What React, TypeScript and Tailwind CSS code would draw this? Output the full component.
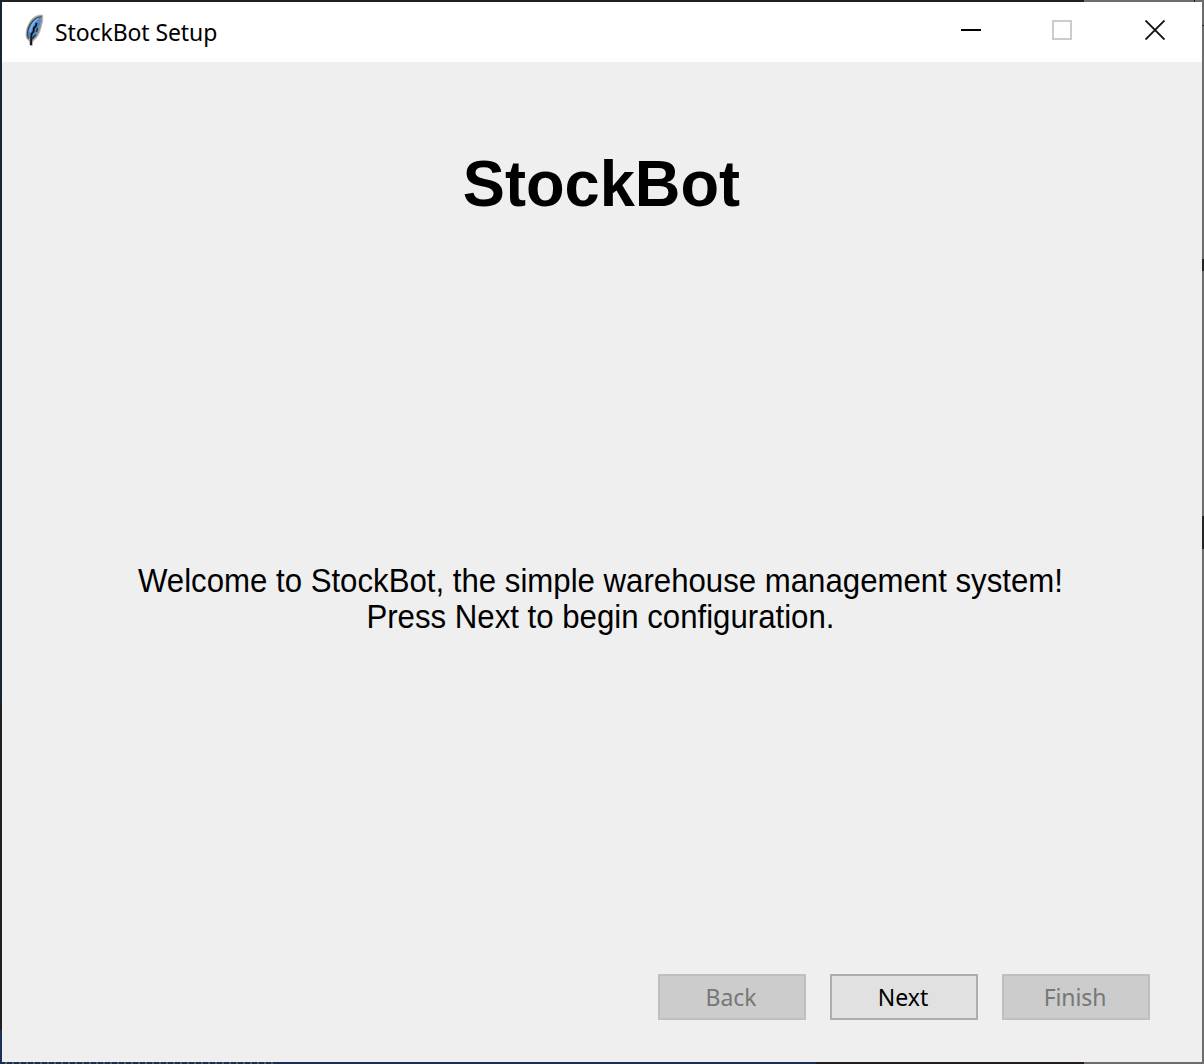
import React from "react";

function Feather() {
  return (
    <svg width="20" height="34" viewBox="0 0 20 34" className="block">
      <path d="M18.500 1C12 0.500 7 4.500 4.500 10.500C2 15 1.500 21 2.500 24L5.500 27.500L6 31.500L8 32L9 27C12.500 24.500 15 20.500 16.500 15.500C18 10 19.500 5 18.500 1Z" fill="#858585" fillOpacity="0.85" stroke="#b5b5b5" strokeWidth="0.8" />
      <path d="M16.500 3C11 4 7 9 5 14.500C3.500 19 3.500 22 5 24.500L9 24C12.500 21 14.500 17 15.500 12C16.500 8 17.500 5 16.500 3Z" fill="#4f8ad2" />
      <path d="M14 4C10 7.500 7 12 6 18" fill="none" stroke="#7fb2ee" strokeWidth="1.8" />
      <path d="M17.500 2.500C11.500 3 6.500 8.500 4.500 14C3.200 18.500 3 21.500 4.500 24.500" fill="none" stroke="#3c4147" strokeWidth="1.2" />
      <path d="M12.500 9L12 12L10 14L9.500 17.500L7.500 20L7 31" fill="none" stroke="#101418" strokeWidth="1.9" />
      <path d="M8 25L12 20.500M13.500 14L12.500 18" stroke="#293440" strokeWidth="1.5" />
    </svg>
  );
}

function TitleBar() {
  return (
    <header className="flex h-[60px] shrink-0 items-start bg-white">
      <div className="ml-[22px] mt-[12px] w-[20px]"><Feather /></div>
      <h2 className="ml-[11px] mt-[13px] whitespace-nowrap font-['Noto_Sans',sans-serif] text-[23px] leading-[34px] tracking-[-0.1px] text-black">StockBot Setup</h2>
      <div className="ml-auto mr-[36px] mt-[17px] flex gap-[71px]">
        <button aria-label="Minimize" className="flex h-[22px] w-[20px] items-center"><span className="h-[2px] w-[20px] bg-black" /></button>
        <button aria-label="Maximize" disabled className="mt-px h-[20px] w-[20px] border-2 border-[#ccc]" />
        <button aria-label="Close" className="ml-[2px] mt-px h-[20px] w-[21px]">
          <svg width="20" height="20" viewBox="0 0 20 20" fill="none" stroke="#111" strokeWidth="1.9"><path d="M0.500 0.500L19.500 19.500M19.500 0.500L0.500 19.500" /></svg>
        </button>
      </div>
    </header>
  );
}

export default function App() {
  return (
    <div className="flex h-[1064px] w-[1204px] flex-col overflow-hidden bg-[#efefef]">
      <div className="flex h-[2px] shrink-0"><i className="w-[1084px] bg-[#231f20]" /><i className="w-[110px] bg-[#6d6d6d]" /><i className="w-px bg-[#222]" /><i className="flex-1 bg-[#6d6d6d]" /></div>
      <div className="flex h-[1060px]">
        <div className="flex w-[2px] flex-col"><i className="h-[698px] bg-[#122733]" /><i className="h-[330px] bg-[#202023]" /><i className="flex-1 bg-[#1d3153]" /></div>
        <div className="flex w-[1200px] flex-col">
          <TitleBar />
          <main className="flex flex-1 flex-col items-center text-black">
            <h1 className="mt-[84px] mr-[2px] origin-center scale-x-[0.987] whitespace-nowrap font-['Liberation_Sans',sans-serif] text-[64px] leading-[76px] font-bold">StockBot</h1>
            <p className="mt-[341px] mr-[3px] origin-center scale-x-[0.945] text-center font-['Liberation_Sans',sans-serif] text-[33px] leading-[36px] whitespace-nowrap">Welcome to StockBot, the simple warehouse management system!<br />Press Next to begin configuration.</p>
            <div className="mr-[52px] mb-[42px] mt-auto flex gap-[24px] self-end font-['Noto_Sans',sans-serif] text-[23px] leading-[42px]">
              <button disabled className="h-[46px] w-[148px] border-2 border-[#bfbfbf] bg-[#ccc] pr-[2px] tracking-[-0.1px] text-[#777]">Back</button>
              <button className="h-[46px] w-[148px] border-2 border-[#adadad] bg-[#e1e1e1] pr-[2px]">Next</button>
              <button disabled className="h-[46px] w-[148px] border-2 border-[#bfbfbf] bg-[#ccc] pr-[2px] tracking-[-0.1px] text-[#777]">Finish</button>
            </div>
          </main>
        </div>
        <div className="flex w-[2px] flex-col bg-[#6d6d6d]"><i className="mt-[23px] h-px bg-[#222]" /><i className="mt-[233px] h-[12px] bg-[#242424]" /><i className="mt-[245px] h-[33px] bg-[#242424]" /></div>
      </div>
      <div className="flex h-[2px] shrink-0"><i className="w-[278px] bg-[repeating-linear-gradient(90deg,#1d2f50_0px,#1d2f50_5px,#565a62_5px,#565a62_7px)]" /><i className="w-[538px] bg-[#1d2f50]" /><i className="w-[268px] bg-[#231f20]" /><i className="flex-1 bg-[#6d6d6d]" /></div>
    </div>
  );
}
